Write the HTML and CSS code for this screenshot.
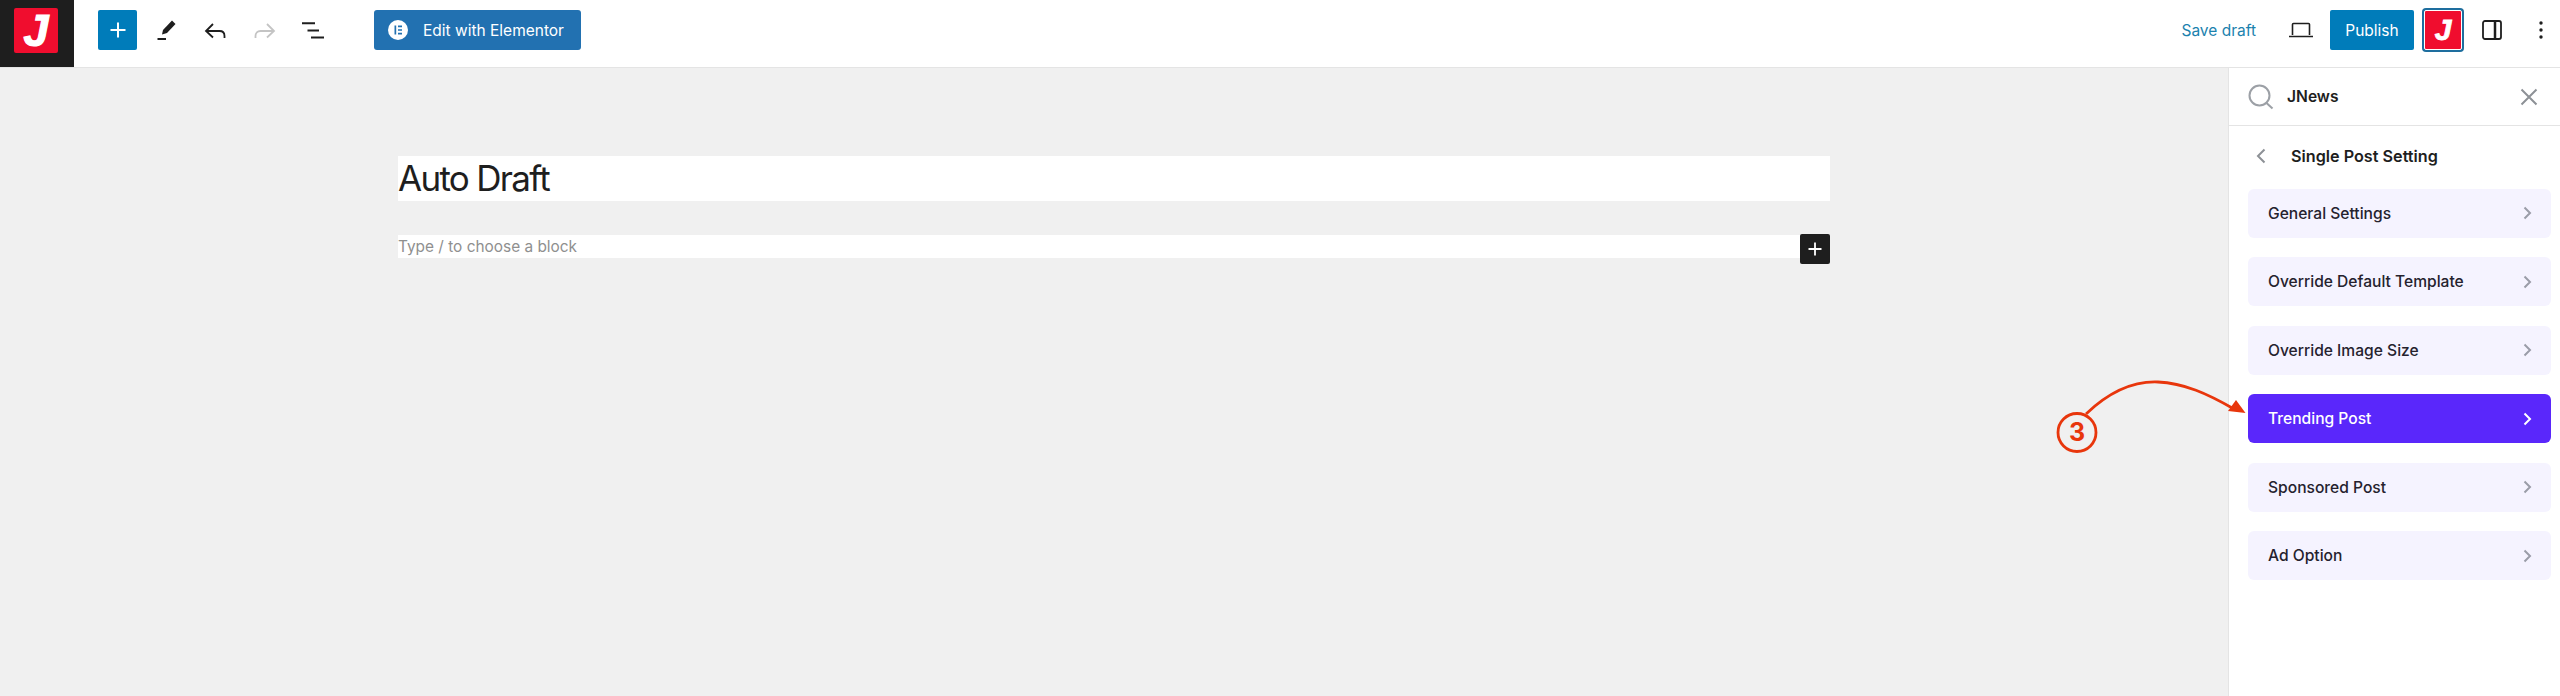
FILE: index.html
```html
<!DOCTYPE html>
<html lang="en">
<head>
    <meta charset="UTF-8">
    <title>Auto Draft - Edit Post</title>
    <link rel="stylesheet" href="styles.css">
</head>
<body>
    <header class="topbar">
        <div class="logo"><span class="logo-mark"><span class="j">J</span></span></div>
        <div class="tools">
            <button class="inserter"><svg width="24" height="24" viewBox="0 0 24 24"><path d="M12 4.500v15M4.500 12h15" stroke="#fff" stroke-width="2"/></svg></button>
            <svg class="tool pen" width="24" height="28" viewBox="0 0 24 28"><path d="M18 4.500 21.500 8 13 17l-5 1.500 1-4.500z" fill="#1e1e1e"/><path d="M3.500 23H12" stroke="#1e1e1e" stroke-width="2"/></svg>
            <svg class="tool undo" width="24" height="24" viewBox="0 0 24 24"><path d="M10 6 3 13l7 6.500M3 13h13.500c3 0 5 2 5 5v2" fill="none" stroke="#1e1e1e" stroke-width="1.800"/></svg>
            <svg class="tool redo" width="24" height="24" viewBox="0 0 24 24"><path d="M14 6l7 7-7 6.500M21 13H7.500c-3 0-5 2-5 5v2" fill="none" stroke="#c4c4c4" stroke-width="1.800"/></svg>
            <svg class="tool list" width="24" height="24" viewBox="0 0 24 24"><path d="M1 5.300h13M6.500 12.600h11.500M10 19.600h13" stroke="#1e1e1e" stroke-width="2"/></svg>
            <button class="elementor">
                <svg width="20" height="20" viewBox="0 0 20 20"><circle cx="10" cy="10" r="10" fill="#fff"/><path d="M6.500 5.500h1.700v9H6.500zM10 5.500h4v1.700h-4zM10 9.150h4v1.700h-4zM10 12.800h4v1.700h-4z" fill="#2271b1"/></svg>
                Edit with Elementor
            </button>
        </div>
        <div class="actions">
            <span class="save">Save draft</span>
            <svg class="laptop" width="24" height="16" viewBox="0 0 24 16"><path d="M3.500 13V2.500a1 1 0 0 1 1-1h15a1 1 0 0 1 1 1V13M0 14.500h24" fill="none" stroke="#1e1e1e" stroke-width="1.600"/></svg>
            <button class="publish">Publish</button>
            <span class="jnews-btn"><span class="jnews-inner"><span class="j j-small">J</span></span></span>
            <svg class="panel" width="20" height="20" viewBox="0 0 20 20"><rect x="1" y="1" width="18" height="18" rx="2" fill="none" stroke="#1e1e1e" stroke-width="1.800"/><path d="M13 1v18" stroke="#1e1e1e" stroke-width="2.500"/></svg>
            <svg class="dots" width="4" height="20" viewBox="0 0 4 20"><circle cx="2" cy="3" r="1.700"/><circle cx="2" cy="10" r="1.700"/><circle cx="2" cy="17" r="1.700"/></svg>
        </div>
    </header>

    <div class="main">
        <section class="editor">
            <div class="title">Auto Draft</div>
            <div class="block-row">
                <div class="placeholder">Type / to choose a block</div>
                <button class="add-block"><svg width="16" height="16" viewBox="0 0 16 16"><path d="M8 1.500v13M1.500 8h13" stroke="#fff" stroke-width="1.800"/></svg></button>
            </div>
        </section>

        <aside class="sidebar">
            <div class="search">
                <svg class="search-icon" width="26" height="26" viewBox="0 0 26 26"><circle cx="11.500" cy="11.500" r="10" fill="none" stroke="#9ca0a6" stroke-width="2"/><path d="M18.500 19l6 5.500" stroke="#9ca0a6" stroke-width="2"/></svg>
                <span class="search-text">JNews</span>
                <svg class="close" width="18" height="18" viewBox="0 0 18 18"><path d="M1.500 1.500l15 15M16.500 1.500l-15 15" stroke="#8d9196" stroke-width="2"/></svg>
            </div>
            <div class="back">
                <svg width="10" height="16" viewBox="0 0 10 16"><path d="M8.500 1.500 2 8l6.500 6.500" fill="none" stroke="#8d9196" stroke-width="2"/></svg>
                <span>Single Post Setting</span>
            </div>
            <ul class="menu">
                <li>General Settings<svg width="9" height="14" viewBox="0 0 9 14"><path d="M1.500 1.500 7 7l-5.500 5.500" fill="none" stroke="#9a9ca8" stroke-width="2"/></svg></li>
                <li>Override Default Template<svg width="9" height="14" viewBox="0 0 9 14"><path d="M1.500 1.500 7 7l-5.500 5.500" fill="none" stroke="#9a9ca8" stroke-width="2"/></svg></li>
                <li>Override Image Size<svg width="9" height="14" viewBox="0 0 9 14"><path d="M1.500 1.500 7 7l-5.500 5.500" fill="none" stroke="#9a9ca8" stroke-width="2"/></svg></li>
                <li class="active">Trending Post<svg width="9" height="14" viewBox="0 0 9 14"><path d="M1.500 1.500 7 7l-5.500 5.500" fill="none" stroke="#fff" stroke-width="2"/></svg></li>
                <li>Sponsored Post<svg width="9" height="14" viewBox="0 0 9 14"><path d="M1.500 1.500 7 7l-5.500 5.500" fill="none" stroke="#9a9ca8" stroke-width="2"/></svg></li>
                <li>Ad Option<svg width="9" height="14" viewBox="0 0 9 14"><path d="M1.500 1.500 7 7l-5.500 5.500" fill="none" stroke="#9a9ca8" stroke-width="2"/></svg></li>
            </ul>
        </aside>
    </div>

    <!-- step annotation drawn over the page -->
    <div class="callout">
        <svg width="200" height="90" viewBox="0 0 200 90">
            <circle cx="24" cy="64.500" r="19" fill="none" stroke="#e8360c" stroke-width="2.800"/>
            <path d="M33 46C56 24 80 13 105 14c26 1 50 12 76 27" fill="none" stroke="#e8360c" stroke-width="2.800"/>
            <path d="M192.500 45 175 43l8-11z" fill="#e8360c"/>
        </svg>
        <span class="callout-num">3</span>
    </div>
</body>
</html>
```

FILE: styles.css
```css
* {
    box-sizing: border-box;
}

html, body {
    margin: 0;
    height: 100%;
}

body {
    position: relative;
    overflow: hidden;
    font-family: Inter, "Liberation Sans", sans-serif;
    color: #1e1e1e;
    background-color: #f0f0f0;
    display: flex;
    flex-direction: column;
}

button {
    border: 0;
    padding: 0;
    font-family: inherit;
}

/* top bar */
.topbar {
    height: 68px;
    flex: none;
    display: flex;
    align-items: flex-start;
    background-color: #fff;
    border-bottom: 1px solid #e4e4e4;
}

.logo {
    flex: none;
    width: 74px;
    height: 67px;
    padding: 8px 14px;
    background-color: #1e1e1e;
}

.logo-mark {
    display: flex;
    align-items: center;
    justify-content: center;
    width: 44px;
    height: 45px;
    border-radius: 2px;
    background-color: #f00d2e;
}

.j {
    color: #fff;
    font-family: "Liberation Sans", sans-serif;
    font-weight: 700;
    font-style: italic;
    font-size: 45px;
    line-height: 1;
    -webkit-text-stroke: 1.2px #fff;
}

.j-small {
    font-size: 30px;
    -webkit-text-stroke: 0.8px #fff;
}

.tools {
    display: flex;
    align-items: center;
    margin: 10px 0 0 24px;
    height: 40px;
}

.inserter {
    display: flex;
    align-items: center;
    justify-content: center;
    width: 39px;
    height: 40px;
    border-radius: 2px;
    background-color: #007cba;
}

.tool {
    flex: none;
}

.pen {
    margin-left: 17px;
}

.undo {
    margin-left: 25px;
}

.redo {
    margin-left: 26px;
}

.list {
    margin-left: 24px;
}

.elementor {
    display: flex;
    align-items: center;
    gap: 15px;
    width: 207px;
    height: 40px;
    margin-left: 49px;
    padding-left: 14px;
    border-radius: 3px;
    background-color: #2271b1;
    color: #fff;
    font-size: 15.5px;
}

.actions {
    display: flex;
    align-items: center;
    margin: 8px 0 0 auto;
    height: 44px;
}

.save {
    color: #1b82ae;
    font-size: 15.5px;
}

.laptop {
    margin-left: 33px;
}

.publish {
    width: 84px;
    height: 40px;
    margin-left: 17px;
    border-radius: 2px;
    background-color: #007cba;
    color: #fff;
    font-size: 15.5px;
}

.jnews-btn {
    display: block;
    width: 42px;
    height: 44px;
    margin-left: 8px;
    padding: 2px;
    border-radius: 4px;
    background-color: #1e6e9e;
}

.jnews-inner {
    display: flex;
    align-items: center;
    justify-content: center;
    height: 100%;
    border: 1px solid #fff;
    border-radius: 2px;
    background-color: #f00d2e;
}

.panel {
    margin-left: 18px;
}

.dots {
    margin-left: 37px;
    margin-right: 17px;
    fill: #1e1e1e;
}

/* editor canvas */
.main {
    flex: 1;
    display: flex;
    min-height: 0;
}

.editor {
    flex: 1;
    padding-top: 88px;
}

.title {
    width: 1432px;
    height: 45px;
    margin: 0 auto;
    background-color: #fff;
    font-size: 35px;
    font-weight: 400;
    line-height: 45px;
    letter-spacing: -1.7px;
}

.block-row {
    display: flex;
    align-items: flex-start;
    width: 1432px;
    margin: 33px auto 0;
}

.placeholder {
    flex: 1;
    height: 23px;
    margin-top: 1px;
    background-color: #fff;
    color: #8f8f8f;
    font-size: 15.4px;
    line-height: 23px;
}

.add-block {
    display: flex;
    align-items: center;
    justify-content: center;
    width: 30px;
    height: 30px;
    border-radius: 2px;
    background-color: #1e1e1e;
}

/* sidebar */
.sidebar {
    width: 332px;
    flex: none;
    background-color: #fff;
    border-left: 1px solid #e4e4e4;
}

.search {
    display: flex;
    align-items: center;
    height: 58px;
    padding: 0 22px 0 19px;
    border-bottom: 1px solid #e4e4e4;
}

.search-text {
    margin-left: 13px;
    font-size: 15.6px;
    font-weight: 600;
}

.close {
    margin-left: auto;
}

.back {
    display: flex;
    align-items: center;
    gap: 25px;
    height: 62.5px;
    padding: 0 0 2.5px 27px;
    font-size: 16.2px;
    font-weight: 600;
}

.menu {
    list-style: none;
    margin: 0;
    padding: 0 9px 0 19px;
    display: flex;
    flex-direction: column;
    gap: 19.5px;
}

.menu li {
    display: flex;
    align-items: center;
    justify-content: space-between;
    height: 49px;
    padding: 0 19px 0 20px;
    border-radius: 6px;
    background-color: #f5f3ff;
    color: #25222e;
    font-size: 15.6px;
    font-weight: 500;
}

.menu li.active {
    background-color: #5a27fb;
    color: #fff;
}

/* annotation */
.callout {
    position: absolute;
    left: 2053px;
    top: 368px;
    width: 200px;
    height: 90px;
}

.callout-num {
    position: absolute;
    left: 0;
    top: 46px;
    width: 48px;
    color: #e8360c;
    font-size: 25px;
    font-weight: 700;
    line-height: 37px;
    text-align: center;
}
```
